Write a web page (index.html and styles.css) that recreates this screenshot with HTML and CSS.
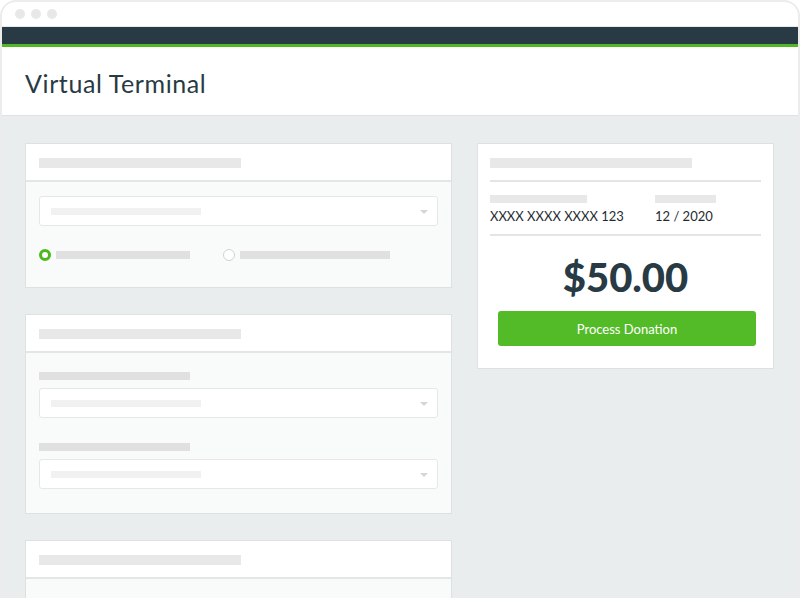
FILE: index.html
```html
<!DOCTYPE html>
<html lang="en">
<head>
    <meta charset="UTF-8">
    <meta name="viewport" content="width=device-width, initial-scale=1.0">
    <title>Virtual Terminal</title>
    <link rel="stylesheet" href="styles.css">
</head>
<body>
    <div class="window">
        <div class="toolbar">
            <span class="dot"></span>
            <span class="dot"></span>
            <span class="dot"></span>
        </div>
        <div class="topbar"></div>
        <div class="page-head">
            <h1>Virtual Terminal</h1>
        </div>

        <div class="content">
            <div class="col-left">
                <div class="card">
                    <div class="card-head"><span class="sk sk-title"></span></div>
                    <div class="card-body">
                        <div class="select"><span class="sk sk-value"></span><span class="caret"></span></div>
                        <div class="radios">
                            <div class="radio-item">
                                <span class="radio checked"></span>
                                <span class="sk sk-radio"></span>
                            </div>
                            <div class="radio-item">
                                <span class="radio"></span>
                                <span class="sk sk-radio wide"></span>
                            </div>
                        </div>
                    </div>
                </div>

                <div class="card">
                    <div class="card-head"><span class="sk sk-title"></span></div>
                    <div class="card-body">
                        <div class="field">
                            <span class="sk sk-label"></span>
                            <div class="select"><span class="sk sk-value"></span><span class="caret"></span></div>
                        </div>
                        <div class="field">
                            <span class="sk sk-label"></span>
                            <div class="select"><span class="sk sk-value"></span><span class="caret"></span></div>
                        </div>
                    </div>
                </div>

                <div class="card">
                    <div class="card-head"><span class="sk sk-title"></span></div>
                    <div class="card-body tall"></div>
                </div>
            </div>

            <div class="col-right">
                <div class="summary">
                    <div class="summary-head"><span class="sk sk-title"></span></div>
                    <div class="card-info">
                        <div class="info">
                            <span class="sk sk-num"></span>
                            <span class="info-text">XXXX XXXX XXXX 123</span>
                        </div>
                        <div class="info">
                            <span class="sk sk-exp"></span>
                            <span class="info-text">12 / 2020</span>
                        </div>
                    </div>
                    <div class="amount">$50.00</div>
                    <button class="btn-process">Process Donation</button>
                </div>
            </div>
        </div>
    </div>
</body>
</html>
```

FILE: styles.css
```css
* {
    margin: 0;
    padding: 0;
    box-sizing: border-box;
}

body {
    background-color: white;
    font-family: Lato, "Open Sans", Arial, sans-serif;
    color: #283a43;
    height: 100vh;
    overflow: hidden;
}

.window {
    height: 598px;
    border: 2px solid #ececec;
    border-bottom: none;
    border-radius: 16px 16px 0 0;
    overflow: hidden;
    background-color: #e9edee;
}

.toolbar {
    height: 25px;
    background-color: white;
    display: flex;
    align-items: center;
    gap: 6px;
    padding-left: 13px;
    border-bottom: 1px solid #e9e9e9;
}

.dot {
    width: 10px;
    height: 10px;
    border-radius: 50%;
    background-color: #e8e8e8;
}

.topbar {
    height: 20px;
    background-color: #283a43;
    border-bottom: 3px solid #4fb824;
}

.page-head {
    height: 69px;
    background-color: white;
    border-bottom: 1px solid #dde2e4;
    padding-left: 23px;
    display: flex;
    align-items: center;
}

.page-head h1 {
    font-size: 25px;
    font-weight: 400;
    color: #283a43;
    letter-spacing: 0.6px;
    padding-top: 3px;
}

.content {
    display: flex;
    gap: 25px;
    padding: 27px 24px 0 23px;
}

.col-left {
    width: 427px;
    display: flex;
    flex-direction: column;
    gap: 26px;
}

.col-right {
    width: 297px;
}

.card {
    border: 1px solid #dde1e2;
    background-color: #f9fafa;
}

.card-head {
    height: 38px;
    background-color: white;
    border-bottom: 2px solid #e3e6e7;
    display: flex;
    align-items: center;
    padding-left: 13px;
    padding-top: 2px;
}

.sk {
    display: block;
    background-color: #e8e8e8;
}

.sk-title {
    width: 202px;
    height: 10px;
}

.card-body {
    padding: 14px 13px 0 13px;
}

.card-body.tall {
    height: 40px;
}

.select {
    height: 30px;
    background-color: white;
    border: 1px solid #e5e7e8;
    border-radius: 3px;
    display: flex;
    align-items: center;
    justify-content: space-between;
    padding: 0 9px 0 11px;
}

.sk-value {
    width: 150px;
    height: 7px;
    background-color: #f1f1f1;
}

.caret {
    width: 0;
    height: 0;
    border-left: 4px solid transparent;
    border-right: 4px solid transparent;
    border-top: 4px solid #d5d5d5;
    margin-top: 1px;
}

.radios {
    display: flex;
    gap: 33px;
    padding: 23px 0 26px 0;
}

.radio-item {
    display: flex;
    align-items: center;
    gap: 5px;
}

.radio {
    width: 12px;
    height: 12px;
    border-radius: 50%;
    border: 1px solid #cfd3d4;
    background-color: white;
}

.radio.checked {
    border: 3px solid #4cb81d;
}

.sk-radio {
    width: 134px;
    height: 8px;
    background-color: #e0e0e0;
}

.sk-radio.wide {
    width: 150px;
}

.field {
    padding-top: 5px;
    padding-bottom: 18px;
}

.field + .field {
    padding-top: 7px;
    padding-bottom: 24px;
}

.sk-label {
    width: 151px;
    height: 8px;
    background-color: #e0e0e0;
    margin-bottom: 8px;
}

.summary {
    background-color: white;
    border: 1px solid #dde1e2;
    padding: 0 12px 22px 12px;
}

.summary-head {
    height: 38px;
    display: flex;
    align-items: center;
    padding-top: 2px;
    border-bottom: 2px solid #e3e6e7;
}

.card-info {
    display: flex;
    height: 54px;
    padding-top: 13px;
    border-bottom: 2px solid #e3e6e7;
}

.info {
    display: flex;
    flex-direction: column;
    gap: 5px;
}

.info:first-child {
    width: 165px;
}

.sk-num {
    width: 97px;
    height: 8px;
}

.sk-exp {
    width: 61px;
    height: 8px;
}

.info-text {
    font-size: 13px;
    color: #1f2b31;
    letter-spacing: 0px;
}

.amount {
    text-align: center;
    font-size: 40px;
    font-weight: 900;
    color: #283a43;
    padding: 16px 0 9px 0;
    line-height: 50px;
}

.btn-process {
    display: block;
    width: 258px;
    height: 35px;
    margin-left: 8px;
    border: none;
    border-radius: 3px;
    background-color: #54bb28;
    color: white;
    font-family: Lato, "Open Sans", Arial, sans-serif;
    font-size: 13px;
}
```
